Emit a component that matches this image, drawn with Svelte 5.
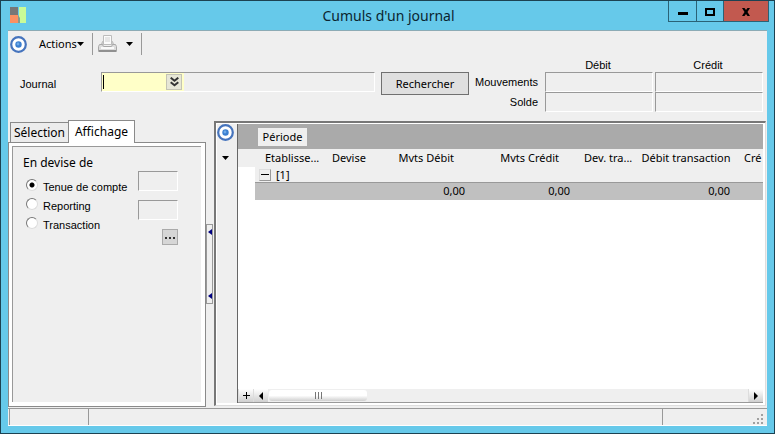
<script lang="ts">
	type Column = { title: string; width: number; value?: string; align?: string };

	const columns: Column[] = [
		{ title: 'Etablisse...', width: 67 },
		{ title: 'Devise', width: 59 },
		{ title: 'Mvts Débit', width: 88, value: '0,00', align: 'right' },
		{ title: 'Mvts Crédit', width: 105, value: '0,00', align: 'right' },
		{ title: 'Dev. tra...', width: 64 },
		{ title: 'Débit transaction', width: 96, value: '0,00', align: 'center' },
		{ title: 'Cré', width: 110 }
	];

	const devises = ['Tenue de compte', 'Reporting', 'Transaction'];

	let journal = $state('');
	let devise = $state('Tenue de compte');
	let tab = $state('Affichage');
	let expanded = $state(true);
</script>

{#snippet target()}
	<svg class="target" viewBox="0 0 17 17" aria-hidden="true">
		<circle cx="8.5" cy="8.5" r="7.3" fill="#fff" stroke="#4674bd" stroke-width="2.2" />
		<circle cx="8.5" cy="8.5" r="3.2" fill="#3b7fd0" />
		<circle cx="8" cy="8" r="1.4" fill="#6daae8" />
	</svg>
{/snippet}

{#snippet caret()}
	<svg class="caret" viewBox="0 0 7 4" aria-hidden="true"><path d="M0 0h7L3.5 4z" /></svg>
{/snippet}

<div class="window">
	<header>
		<svg class="logo" viewBox="0 0 16 16" aria-hidden="true">
			<path fill="#777" d="M0 0h8v8H0z" />
			<path fill="#fb9062" d="M0 8h8v8H0z" />
			<path fill="#c9fb97" d="M9 0h7v16h-6V11H9z" />
			<path fill="#8a9a8a" d="M8 8l2 3v5H8z" />
		</svg>
		<h1>Cumuls d'un journal</h1>
		<div class="controls">
			<button type="button" class="min" aria-label="Réduire">
				<svg viewBox="0 0 10 9"><path d="M0 5h10v3H0z" /></svg>
			</button>
			<button type="button" class="max" aria-label="Agrandir">
				<svg viewBox="0 0 10 9"><path fill-rule="evenodd" d="M0 1h10v8H0zM2 3v4h6V3z" /></svg>
			</button>
			<button type="button" class="close" aria-label="Fermer">
				<svg viewBox="0 0 10 9"><path d="M1 1h2.500l1.500 2 1.500-2H9L6.500 5 9 9H6.500L5 7 3.500 9H1l2.500-4z" /></svg>
			</button>
		</div>
	</header>

	<main>
		<div class="toolbar">
			<button type="button" aria-label="Favoris">{@render target()}</button>
			<button type="button" class="actions">Actions {@render caret()}</button>
			<button type="button" class="print" aria-label="Imprimer">
				<svg viewBox="0 0 19 18" aria-hidden="true">
					<path fill="#d4d4d4" stroke="#b8b8b8" d="M3.500 9.500l1-3h10l1 3z" />
					<path fill="#fbfbfb" stroke="#bcbcbc" d="M5.500.5h8v9h-8z" />
					<path fill="#e6e6e6" d="M7 2h5v5H7z" />
					<path fill="#dcdcdc" stroke="#a8a8a8" d="M1.500 9.500h3l1 2h8l1-2h3l1 2v5h-18v-5z" />
					<path fill="#fafafa" d="M3 12h13v2H3z" />
					<path fill="#909090" d="M1 15h17v2H1z" />
				</svg>
			</button>
			<button type="button" class="more" aria-label="Options d'impression">{@render caret()}</button>
		</div>

		<form class="search" onsubmit={(e) => e.preventDefault()}>
			<label for="journal">Journal</label>
			<div class="field">
				<div class="lookup">
					<input id="journal" bind:value={journal} autocomplete="off" />
					<button type="button" aria-label="Choisir un journal">
						<svg viewBox="0 0 9 10"><path fill="none" stroke="#333" stroke-width="2" d="M.7.700l3.800 3 3.800-3M.7 5.300l3.800 3 3.800-3" /></svg>
					</button>
				</div>
				<output for="journal"></output>
			</div>
			<button class="submit">Rechercher</button>
			<table class="totals">
				<thead>
					<tr><td></td><th scope="col">Débit</th><th scope="col">Crédit</th></tr>
				</thead>
				<tbody>
					{#each ['Mouvements', 'Solde'] as row}
						<tr>
							<th scope="row">{row}</th>
							<td><input readonly aria-label="{row} débit" /></td>
							<td><input readonly aria-label="{row} crédit" /></td>
						</tr>
					{/each}
				</tbody>
			</table>
		</form>

		<div class="panes">
			<aside>
				<div class="tabs" role="tablist">
					{#each ['Sélection', 'Affichage'] as name}
						<button
							type="button"
							role="tab"
							aria-selected={tab === name}
							class:active={tab === name}
							onclick={() => (tab = name)}>{name}</button
						>
					{/each}
				</div>
				<div class="panel" role="tabpanel">
					<fieldset>
						<legend>En devise de</legend>
						<div class="choice">
							<div class="radios">
								{#each devises as name}
									<label><input type="radio" value={name} bind:group={devise} />{name}</label>
								{/each}
							</div>
							<div class="codes">
								<input readonly aria-label="Devise de tenue de compte" />
								<input readonly aria-label="Devise de reporting" />
								<button type="button" aria-label="Choisir la devise">
									<svg viewBox="0 0 10 3"><path d="M0 1h2v2H0zM4 1h2v2H4zM8 1h2v2H8z" /></svg>
								</button>
							</div>
						</div>
					</fieldset>
				</div>
			</aside>

			<button type="button" class="splitter" aria-label="Masquer le volet">
				<span>
					<svg viewBox="0 0 4 6"><path d="M4 0v6L0 3z" /></svg>
					<svg viewBox="0 0 4 6"><path d="M4 0v6L0 3z" /></svg>
				</span>
			</button>

			<section>
				<div class="rail">
					<button type="button" aria-label="Favoris">{@render target()}</button>
					<button type="button" aria-label="Options de la grille">{@render caret()}</button>
				</div>
				<div class="grid">
					<div class="group"><button type="button">Période</button></div>
					<div class="sheet">
						<table>
							<colgroup>
								<col style="width: 17px" />
								{#each columns as column}
									<col style="width: {column.width}px" />
								{/each}
							</colgroup>
							<thead>
								<tr>
									<td></td>
									{#each columns as column}
										<th scope="col" class={column.align}>{column.title}</th>
									{/each}
								</tr>
							</thead>
							<tbody>
								<tr class="heading">
									<td></td>
									<td colspan={columns.length}>
										<div>
											<button type="button" aria-label="Replier" onclick={() => (expanded = !expanded)}>
												<svg viewBox="0 0 8 7"><path d={expanded ? 'M0 3h8v1H0z' : 'M0 3h8v1H0zM3 0h1v7H3z'} /></svg>
											</button>
											[1]
										</div>
									</td>
								</tr>
								{#if expanded}
									<tr class="sum">
										<td></td>
										{#each columns as column}
											<td>{column.value ?? ''}</td>
										{/each}
									</tr>
								{/if}
							</tbody>
						</table>
					</div>
					<div class="scroll">
						<button type="button" class="add" aria-label="Ajouter">
							<svg viewBox="0 0 7 7"><path d="M0 3h7v1H0zM3 0h1v7H3z" /></svg>
						</button>
						<button type="button" aria-label="Défiler à gauche">
							<svg viewBox="0 0 4 8"><path d="M4 0v8L0 4z" /></svg>
						</button>
						<div class="track">
							<div class="thumb"><i></i><i></i><i></i></div>
						</div>
						<button type="button" aria-label="Défiler à droite">
							<svg viewBox="0 0 4 8"><path d="M0 0v8l4-4z" /></svg>
						</button>
					</div>
				</div>
			</section>
		</div>

		<footer>
			<span></span>
			<span></span>
			<span>
				<svg viewBox="0 0 11 11" aria-hidden="true">
					<path fill="#a0a0a0" d="M8 0h2v2H8zM4 4h2v2H4zM8 4h2v2H8zM0 8h2v2H0zM4 8h2v2H4zM8 8h2v2H8z" />
				</svg>
			</span>
		</footer>
	</main>
</div>

<style>
	:global(body) {
		margin: 0;
	}
	.window {
		--ui: 'Noto Sans', 'Open Sans', sans-serif;
		--small: 'Liberation Sans', Arial, sans-serif;
		box-sizing: border-box;
		min-height: 100vh;
		display: flex;
		flex-direction: column;
		padding: 0 7px 7px;
		border: 1px solid #1c4252;
		background: #66c9ea;
		color: #000;
		font: 11px/14px var(--ui);
	}
	.window :global(*) {
		box-sizing: border-box;
	}
	button,
	input {
		margin: 0;
		padding: 0;
		border: none;
		outline: none;
		background: none;
		color: inherit;
		font: inherit;
	}
	svg {
		display: block;
	}
	table {
		border-collapse: collapse;
	}
	th,
	td {
		padding: 0;
		font-weight: normal;
	}

	header {
		display: grid;
		grid-template-columns: 101px 1fr 101px;
		height: 29px;
		margin-right: -2px;
	}
	.logo {
		width: 16px;
		height: 16px;
		margin: 6px 2px;
	}
	h1 {
		margin: 0;
		color: #0b2530;
		font: 14px/30px var(--ui);
		text-align: center;
	}
	.controls {
		display: flex;
		height: 21px;
		border: 1px solid #2a6276;
		border-top: none;
	}
	.controls button {
		display: grid;
		place-items: center;
		width: 27px;
	}
	.controls button.max {
		width: 28px;
		border: 1px solid #2a6276;
		border-width: 0 1px;
	}
	.controls button.close {
		flex: 1;
		background: #c2594f;
	}
	.controls svg {
		width: 10px;
		height: 9px;
	}

	main {
		flex: 1;
		display: flex;
		flex-direction: column;
		background: #efefef;
		border-top: 1px solid #8cabb5;
	}
	.toolbar {
		display: flex;
		align-items: center;
		height: 27px;
		padding: 0 2px 1px;
	}
	.target {
		width: 17px;
		height: 17px;
	}
	.caret {
		width: 7px;
		height: 4px;
	}
	.actions {
		display: flex;
		align-items: center;
		margin-left: 12px;
	}
	.print {
		margin-left: 8px;
		padding: 2px 0 2px 5px;
		border-left: 1px solid #999;
	}
	.print svg {
		width: 19px;
		height: 18px;
	}
	.more {
		height: 22px;
		padding: 0 8px 0 9px;
		border-right: 1px solid #999;
	}

	.search {
		display: flex;
		font-family: var(--small);
	}
	.search > label {
		width: 93px;
		padding: 19px 0 0 12px;
	}
	.field,
	.submit {
		margin-top: 14px;
	}
	.field {
		flex: 1;
		display: flex;
		height: 20px;
		border: 1px solid;
		border-color: #999 #fff #fff #999;
	}
	.lookup {
		display: flex;
		align-items: center;
		width: 82px;
		padding-right: 2px;
		background: #ffffc8;
	}
	.lookup input {
		flex: 1;
		min-width: 0;
		height: 14px;
		margin-left: 1px;
		border-left: 1px solid #000;
		caret-color: transparent;
	}
	.lookup button {
		display: grid;
		place-items: center;
		width: 16px;
		height: 16px;
		border: 1px solid #c4c4b4;
		background: #e6e6d6;
	}
	.lookup svg {
		width: 9px;
		height: 10px;
	}
	.submit {
		width: 88px;
		height: 23px;
		margin-left: 6px;
		border: 1px solid #707070;
		background: #dfdfdf;
		font-family: var(--ui);
	}
	.totals {
		width: 290px;
		margin: 0 2px 0 6px;
		table-layout: fixed;
	}
	.totals thead td {
		width: 70px;
	}
	.totals thead th {
		height: 14px;
		padding-right: 4px;
		line-height: 14px;
	}
	.totals tbody th {
		padding-right: 7px;
		text-align: right;
	}
	.totals td {
		height: 20px;
	}
	.totals thead td {
		height: 14px;
	}
	.totals input {
		display: block;
		width: calc(100% - 2px);
		height: 20px;
		border: 1px solid;
		border-color: #999 #fff #fff #999;
	}

	.panes {
		flex: 1;
		display: flex;
		padding: 8px 1px 0 0;
	}
	aside {
		display: flex;
		flex-direction: column;
		width: 198px;
	}
	.tabs {
		display: flex;
		align-items: flex-end;
		height: 23px;
		margin-bottom: -1px;
		padding-left: 2px;
	}
	.tabs button {
		width: 58px;
		height: 21px;
		border: 1px solid #8a8a8a;
		border-right: none;
		background: #ececec;
		font-size: 12px;
	}
	.tabs .active {
		position: relative;
		width: 67px;
		height: 23px;
		border-right: 1px solid #8a8a8a;
		border-bottom: none;
		background: #fff;
	}
	.panel {
		flex: 1;
		display: flex;
		border: 1px solid #8a8a8a;
		background: #fff;
		padding: 3px 4px 4px 3px;
	}
	fieldset {
		flex: 1;
		min-width: 0;
		margin: 0;
		padding: 8px 0 0 10px;
		border: 1px solid #999;
		border-width: 1px 0 0 1px;
		background: #efefef;
	}
	legend {
		float: left;
		width: 100%;
		padding: 0;
		font-size: 12px;
		line-height: 16px;
	}
	.choice {
		clear: both;
		display: flex;
		gap: 10px;
		font-family: var(--small);
	}
	.radios {
		width: 105px;
		padding-top: 7px;
	}
	.radios label {
		display: flex;
		gap: 5px;
		height: 19px;
		line-height: 19px;
		white-space: nowrap;
	}
	.radios input {
		appearance: none;
		flex: none;
		width: 12px;
		height: 12px;
		margin: 1px 0 0 3px;
		border: 1px solid;
		border-color: #777 #ddd #ddd #777;
		border-radius: 50%;
		background: #fff;
	}
	.radios input:checked {
		background: radial-gradient(#000 2px, #fff 3px);
	}
	.codes {
		display: flex;
		flex-direction: column;
		gap: 9px;
	}
	.codes input {
		width: 40px;
		height: 20px;
		border: 1px solid;
		border-color: #999 #fff #fff #999;
	}
	.codes button {
		align-self: flex-end;
		display: grid;
		place-items: center;
		width: 16px;
		height: 16px;
		border: 1px solid #aaa;
		background: #d6d6d6;
	}
	.codes svg {
		width: 10px;
		height: 3px;
		fill: #333;
	}

	.splitter {
		display: flex;
		align-items: center;
		width: 8px;
	}
	.splitter span {
		display: flex;
		flex-direction: column;
		justify-content: space-between;
		width: 7px;
		height: 80px;
		padding: 4px 0 4px 1px;
		border: 1px solid #999;
		background: #efefef;
	}
	.splitter svg {
		width: 4px;
		height: 6px;
		fill: #000080;
	}

	section {
		flex: 1;
		min-width: 0;
		display: flex;
		margin: 1px 0 1px;
		padding: 1px 2px 2px 1px;
		border: solid;
		border-width: 2px 1px 1px 2px;
		border-color: #777 #ddd #ddd #777;
		background: #fff;
	}
	.rail {
		display: flex;
		flex-direction: column;
		align-items: center;
		gap: 15px;
		width: 20px;
		padding-right: 3px;
		background: #efefef;
	}
	.grid {
		flex: 1;
		min-width: 0;
		display: flex;
		flex-direction: column;
		border-left: 1px solid #666;
	}
	.group {
		height: 25px;
		padding: 4px 20px;
		background: #aaa;
	}
	.group button {
		width: 49px;
		height: 18px;
		background: #efefef;
	}
	.sheet {
		flex: 1;
		overflow: hidden;
	}
	.sheet table {
		width: 606px;
		table-layout: fixed;
	}
	.sheet thead {
		background: #efefef;
	}
	.sheet thead tr {
		height: 18px;
	}
	.sheet th {
		padding-left: 10px;
		text-align: left;
		white-space: nowrap;
	}
	.sheet th.right {
		padding: 0 15px 0 0;
		text-align: right;
	}
	.sheet th.center {
		padding: 0;
		text-align: center;
	}
	.heading td + td {
		border-bottom: 1px solid #999;
		background: #efefef;
	}
	.heading div {
		display: flex;
		align-items: center;
		gap: 5px;
		height: 15px;
		padding-left: 4px;
	}
	.heading button {
		display: grid;
		place-items: center;
		width: 12px;
		height: 12px;
		border: 1px solid;
		border-color: #ddd #999 #999 #ddd;
	}
	.heading svg {
		width: 8px;
		height: 7px;
	}
	.sum {
		height: 17px;
	}
	.sum td {
		padding-right: 4px;
		text-align: right;
	}
	.sum td + td {
		background: #c0c0c0;
	}
	.scroll {
		display: flex;
		height: 14px;
		border-bottom: 1px solid #999;
	}
	.scroll button {
		display: grid;
		place-items: center;
		width: 15px;
		border-left: 1px solid #ddd;
		background: linear-gradient(#fff, #d0d0d0);
	}
	.scroll svg {
		width: 4px;
		height: 8px;
	}
	.scroll .add svg {
		width: 7px;
		height: 7px;
	}
	.track {
		flex: 1;
		padding: 1px 0 1px 1px;
		background: #efefef;
	}
	.thumb {
		display: flex;
		justify-content: center;
		gap: 2px;
		width: 98px;
		height: 11px;
		padding: 2px 0;
		border-radius: 3px;
		background: linear-gradient(#fff 50%, #cfcfcf);
	}
	.thumb i {
		width: 1px;
		background: #777;
	}

	footer {
		display: flex;
		height: 18px;
		margin-top: 1px;
		padding-left: 1px;
		border-top: 1px solid #999;
		border-bottom: 1px solid #fff;
	}
	footer span {
		flex: 1;
		border-left: 1px solid #999;
	}
	footer span:first-child {
		flex: none;
		width: 79px;
	}
	footer span:last-child {
		flex: none;
		display: flex;
		align-items: flex-end;
		justify-content: flex-end;
		width: 105px;
		padding-right: 3px;
	}
	footer svg {
		width: 11px;
		height: 11px;
	}
</style>
